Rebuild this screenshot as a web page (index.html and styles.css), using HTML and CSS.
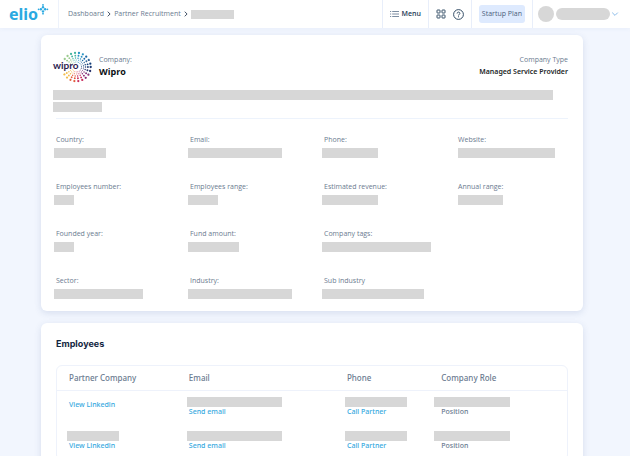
FILE: index.html
```html
<!DOCTYPE html>
<html lang="en">
<head>
    <meta charset="UTF-8">
    <meta name="viewport" content="width=device-width, initial-scale=1.0">
    <title>Elio - Wipro</title>
    <link rel="stylesheet" href="styles.css">
</head>
<body>
    <header class="topbar">
        <a class="logo" href="#" aria-label="elio">
            <svg width="40" height="20" viewBox="0 0 40 20">
                <text class="logo-text" x="0" y="16">elio</text>
                <g fill="#2ba9e1">
                    <circle cx="34" cy="0.9" r="0.9"/>
                    <circle cx="34" cy="3.2" r="1.2"/>
                    <circle cx="34" cy="7.4" r="1.2"/>
                    <circle cx="34" cy="9.7" r="0.9"/>
                    <circle cx="29.6" cy="5.3" r="0.9"/>
                    <circle cx="31.9" cy="5.3" r="1.2"/>
                    <circle cx="36.1" cy="5.3" r="1.2"/>
                    <circle cx="38.4" cy="5.3" r="0.9"/>
                </g>
            </svg>
        </a>
        <nav class="breadcrumb">
            <a href="#">Dashboard</a>
            <svg class="sep" width="4" height="6" viewBox="0 0 4 6"><path d="M0.7 0.7 3.1 3 0.7 5.3"/></svg>
            <a href="#">Partner Recruitment</a>
            <svg class="sep" width="4" height="6" viewBox="0 0 4 6"><path d="M0.7 0.7 3.1 3 0.7 5.3"/></svg>
            <span class="bar" style="width: 43px"></span>
        </nav>
        <div class="tool">
            <button class="menu-btn">
                <svg width="9" height="8" viewBox="0 0 9 8" stroke="#5b708a" stroke-width="0.8"><path d="M0 1.5h1.2M2.2 1.5H9M0 4h1.2M2.2 4H9M0 6.5h1.2M2.2 6.5H9"/></svg>
                Menu
            </button>
        </div>
        <div class="tool tool-icons">
            <button aria-label="Apps">
                <svg width="10" height="10" viewBox="0 0 10 10" fill="none" stroke="#1e3a56" stroke-width="0.9"><rect x="1" y="1" width="3" height="3" rx="0.5"/><rect x="6" y="1" width="3" height="3" rx="0.5"/><rect x="1" y="6" width="3" height="3" rx="0.5"/><rect x="6" y="6" width="3" height="3" rx="0.5"/></svg>
            </button>
            <button aria-label="Help">
                <svg width="11" height="11" viewBox="0 0 11 11" fill="none" stroke="#1e3a56" stroke-width="0.9"><circle cx="5.5" cy="5.5" r="4.9"/><path d="M4.1 4.5c0-1.9 2.8-1.8 2.8-.1 0 1-1.4 1-1.4 2.1M5.5 7.3v1"/></svg>
            </button>
        </div>
        <div class="tool">
            <button class="plan">Startup Plan</button>
        </div>
        <div class="tool tool-user">
            <button class="user" aria-label="Account">
                <span class="avatar"></span>
                <span class="user-name"></span>
                <svg width="6" height="4" viewBox="0 0 6 4" fill="none" stroke="#7fb5e6" stroke-width="0.9"><path d="M0.2 0.6 3 3.4 5.8 0.6"/></svg>
            </button>
        </div>
    </header>

    <main class="page">
        <section class="card">
            <div class="company">
                <svg class="company-logo" width="40" height="32" viewBox="0 0 40 32" role="img" aria-label="Wipro logo">
                    <mask id="dots" maskUnits="userSpaceOnUse" x="-24" y="-24" width="48" height="48">
                        <g fill="none" stroke="#fff" stroke-linecap="round">
                            <circle r="14.2" stroke-width="2.3" stroke-dasharray="0 4.06"/>
                            <circle r="11.4" stroke-width="1.9" stroke-dasharray="0 3.26"/>
                            <circle r="9" stroke-width="1.5" stroke-dasharray="0 2.57"/>
                            <circle r="7" stroke-width="1" stroke-dasharray="0 1.83"/>
                            <circle r="5" stroke-width="0.8" stroke-dasharray="0 1.57"/>
                        </g>
                    </mask>
                    <g transform="translate(23.5 16)" mask="url(#dots)">
                        <path fill="#9ccb8f" d="M0 0-20-10-11-19z"/>
                        <path fill="#45b5a0" d="M0 0-11-19 0-22z"/>
                        <path fill="#2494c4" d="M0 0 0-22 11-19z"/>
                        <path fill="#1c69a6" d="M0 0 11-19 19-11z"/>
                        <path fill="#15407a" d="M0 0 19-11 22 0z"/>
                        <path fill="#28336c" d="M0 0 22 0 19 11z"/>
                        <path fill="#8a2b78" d="M0 0 19 11 11 19z"/>
                        <path fill="#c92a5c" d="M0 0 11 19 0 22z"/>
                        <path fill="#e2593a" d="M0 0 0 22-11 19z"/>
                        <path fill="#f3bd4a" d="M0 0-11 19-20 10z"/>
                    </g>
                    <text class="wipro-text" x="0" y="18">wipro</text>
                </svg>
                <div class="company-name">
                    <span class="label">Company:</span>
                    <h1>Wipro</h1>
                </div>
                <div class="company-type">
                    <span class="label">Company Type</span>
                    <strong>Managed Service Provider</strong>
                </div>
            </div>
            <div class="about">
                <span class="bar" style="width: 97%"></span>
                <span class="bar" style="width: 49px"></span>
            </div>
            <div class="facts">
                <div class="fact"><span class="label">Country:</span><span class="bar" style="width: 52px"></span></div>
                <div class="fact"><span class="label">Email:</span><span class="bar" style="width: 94px"></span></div>
                <div class="fact"><span class="label">Phone:</span><span class="bar" style="width: 56px"></span></div>
                <div class="fact fact-last"><span class="label">Website:</span><span class="bar" style="width: 97px"></span></div>
                <div class="fact"><span class="label">Employees number:</span><span class="bar" style="width: 20px"></span></div>
                <div class="fact"><span class="label">Employees range:</span><span class="bar" style="width: 30px"></span></div>
                <div class="fact"><span class="label">Estimated revenue:</span><span class="bar" style="width: 56px"></span></div>
                <div class="fact fact-last"><span class="label">Annual range:</span><span class="bar" style="width: 45px"></span></div>
                <div class="fact"><span class="label">Founded year:</span><span class="bar" style="width: 20px"></span></div>
                <div class="fact"><span class="label">Fund amount:</span><span class="bar" style="width: 51px"></span></div>
                <div class="fact fact-wide"><span class="label">Company tags:</span><span class="bar" style="width: 109px"></span></div>
                <div class="fact"><span class="label">Sector:</span><span class="bar" style="width: 89px"></span></div>
                <div class="fact"><span class="label">Industry:</span><span class="bar" style="width: 104px"></span></div>
                <div class="fact"><span class="label">Sub industry</span><span class="bar" style="width: 102px"></span></div>
            </div>
        </section>

        <section class="card">
            <h2>Employees</h2>
            <div class="table-box">
                <table>
                    <thead>
                        <tr>
                            <th class="col-company">Partner Company</th>
                            <th class="col-email">Email</th>
                            <th class="col-phone">Phone</th>
                            <th class="col-role">Company Role</th>
                        </tr>
                    </thead>
                    <tbody>
                        <tr>
                            <td class="unnamed"><a href="#">View Linkedin</a></td>
                            <td><span class="bar" style="width: 95px"></span><a href="#">Send email</a></td>
                            <td><span class="bar" style="width: 62px"></span><a href="#">Call Partner</a></td>
                            <td class="role"><span class="bar" style="width: 76px"></span>Position</td>
                        </tr>
                        <tr>
                            <td><span class="bar" style="width: 52px"></span><a href="#">View Linkedin</a></td>
                            <td><span class="bar" style="width: 95px"></span><a href="#">Send email</a></td>
                            <td><span class="bar" style="width: 62px"></span><a href="#">Call Partner</a></td>
                            <td class="role"><span class="bar" style="width: 76px"></span>Position</td>
                        </tr>
                    </tbody>
                </table>
            </div>
        </section>
    </main>
</body>
</html>
```

FILE: styles.css
```css
* {
    box-sizing: border-box;
}
body {
    margin: 0;
    background-color: #f2f6fe;
    color: #6b7b90;
    font-family: "Open Sans", "Noto Sans", sans-serif;
    font-size: 7px;
    line-height: 10px;
}
a {
    color: inherit;
    text-decoration: none;
}
button {
    display: flex;
    align-items: center;
    padding: 0;
    border: none;
    background: none;
    color: #1e3a56;
    font: inherit;
    cursor: pointer;
}
svg {
    display: block;
    overflow: visible;
}
.bar {
    display: block;
    height: 10px;
    background-color: #d7d7d7;
}

/* Top bar */
.topbar {
    display: flex;
    height: 28px;
    background-color: #fff;
    box-shadow: 0 1px 4px rgba(60, 100, 180, 0.06);
}
.logo {
    display: flex;
    align-items: center;
    width: 59px;
    padding-left: 9px;
    border-right: 1px solid #edf2fb;
}
.logo-text {
    fill: #2ba9e1;
    font-family: "Noto Sans", sans-serif;
    font-size: 16px;
    font-weight: 700;
}
.breadcrumb {
    display: flex;
    flex: 1;
    align-items: center;
    gap: 3px;
    padding-left: 9px;
}
.breadcrumb .bar {
    height: 9px;
}
.sep {
    fill: none;
    stroke: #475569;
    stroke-width: 1;
}
.tool {
    display: flex;
    align-items: center;
    padding: 0 7px;
    border-left: 1px solid #e8eefa;
}
.tool-icons {
    gap: 7px;
}
.tool-user {
    padding: 0 12px 0 5px;
}
.menu-btn {
    gap: 2px;
    font-weight: 600;
}
.plan {
    height: 18px;
    padding: 0 3px;
    border-radius: 3px;
    background-color: #deeafe;
    color: #4a607c;
}
.user {
    gap: 2px;
}
.avatar {
    width: 16px;
    height: 16px;
    border-radius: 50%;
    background-color: #d7d7d7;
}
.user-name {
    width: 54px;
    height: 12px;
    border-radius: 6px;
    background-color: #d7d7d7;
}

/* Cards */
.page {
    display: flex;
    flex-direction: column;
    gap: 12px;
    padding: 7px 47px 12px 41px;
}
.card {
    padding: 16px 15px 12px;
    border-radius: 6px;
    background-color: #fff;
    box-shadow: 0 2px 7px rgba(50, 80, 140, 0.14);
}
.company {
    display: flex;
    align-items: center;
    margin-left: -3px;
}
.company-logo {
    margin-right: 6px;
}
.wipro-text {
    fill: #2d1d50;
    font-family: Lato, sans-serif;
    font-size: 10px;
    font-weight: 700;
}
.company-name {
    flex: 1;
}
.label {
    display: block;
}
h1 {
    margin: 0;
    color: #0b0f14;
    font-size: 9px;
    line-height: 14px;
}
.company-type {
    text-align: right;
}
.company-type strong {
    display: block;
    color: #1b1f27;
    font-family: "Noto Sans", sans-serif;
    font-weight: 600;
    line-height: 14px;
}
.about {
    display: flex;
    flex-direction: column;
    gap: 2px;
    margin-top: 7px;
    margin-left: -3px;
}
.facts {
    display: grid;
    grid-template-columns: repeat(4, 1fr);
    gap: 24px;
    margin-top: 6px;
    padding-top: 16px;
    border-top: 1px solid #edf3fc;
}
.fact .bar {
    margin-top: 3px;
    margin-left: -2px;
}
.fact-last .bar {
    margin-left: 0;
}
.fact-wide {
    grid-column: span 2;
}

/* Employees */
h2 {
    margin: 0 0 16px;
    color: #12263f;
    font-family: Inter, sans-serif;
    font-size: 9px;
    font-weight: 700;
    line-height: 10px;
}
.table-box {
    border: 1px solid #eef2fb;
    border-radius: 6px;
}
table {
    width: 100%;
    border-collapse: collapse;
    table-layout: fixed;
    font-family: "Noto Sans", sans-serif;
}
th {
    height: 24px;
    padding: 0 0 0 12px;
    border-bottom: 1px solid #eef2fb;
    font-size: 8px;
    font-weight: 500;
    text-align: left;
}
td {
    height: 35px;
    padding: 6px 0 0 12px;
    font-weight: 500;
    vertical-align: top;
}
td a {
    color: #36a9e0;
}
td .bar {
    margin-left: -2px;
}
.unnamed {
    padding-top: 9px;
}
.role .bar {
    margin-left: -7px;
}
.col-company {
    width: 23.5%;
}
.col-email {
    width: 31%;
}
.col-phone {
    width: 18.5%;
}
```
